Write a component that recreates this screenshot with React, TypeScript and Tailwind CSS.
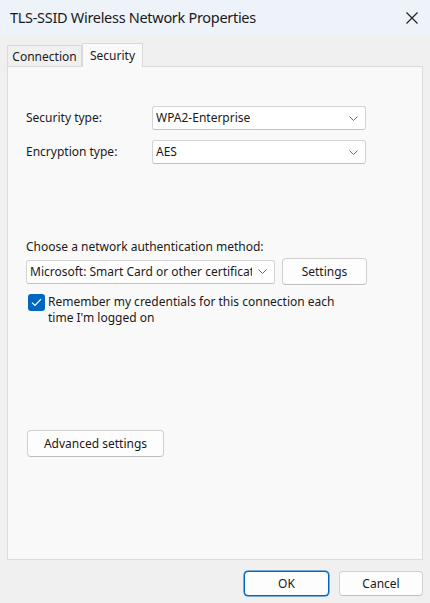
import React from 'react';

const Chevron = () => (
  <svg width="9" height="5" viewBox="0 0 9 5" className="shrink-0">
    <path d="M0.5 0.5 L4.5 4.5 L8.5 0.5" fill="none" stroke="#6a6a6a" strokeWidth="1" />
  </svg>
);

const Select: React.FC<{ value: string; className: string }> = ({ value, className }) => (
  <div
    className={`flex items-center bg-white border border-[#d4d4d4] border-b-[#c2c2c2] rounded-[3px] pl-[3px] pr-[7px] text-[#1a1a1a] ${className}`}
  >
    <span className="flex-1 min-w-0 whitespace-nowrap overflow-hidden mr-[6px]">{value}</span>
    <Chevron />
  </div>
);

const Button: React.FC<{ label: string; className: string; primary?: boolean }> = ({ label, className, primary }) => (
  <div
    className={`flex items-center justify-center bg-[#fdfdfd] rounded-[4px] border ${
      primary ? 'border-[#0067c0] ring-[0.5px] ring-[#0067c0]' : 'border-[#d0d0d0] border-b-[#bdbdbd]'
    } text-[#1a1a1a] ${className}`}
  >
    {label}
  </div>
);

export default function App() {
  return (
    <div className="w-[430px] h-[603px] bg-[#f0f0f0] flex flex-col text-[12px] font-['Noto_Sans',sans-serif] text-[#1a1a1a]">
      <div className="h-[35px] bg-[#eef3f9] flex items-center justify-between pl-[10px] pr-[12px] shrink-0">
        <span className="text-[14.5px] text-[#1a1a1a] tracking-[-0.3px]">TLS-SSID Wireless Network Properties</span>
        <svg width="12" height="12" viewBox="0 0 12 12">
          <path d="M0.5 0.5 L11.5 11.5 M11.5 0.5 L0.5 11.5" stroke="#1a1a1a" strokeWidth="1.1" />
        </svg>
      </div>

      <div className="px-[7px] pt-[8px]">
        <div className="flex items-end h-[23px]">
          <div className="h-[21px] w-[75px] border border-b-0 border-[#d9d9d9] bg-[#f0f0f0] flex items-center justify-center pt-[2px]">
            Connection
          </div>
          <div className="h-[24px] w-[61px] -mb-px relative z-10 border border-b-0 border-[#d9d9d9] bg-[#f9f9f9] flex items-center justify-center">
            Security
          </div>
        </div>
        <div className="h-[494px] border border-[#dcdcdc] bg-[#f9f9f9] pl-[18px] pt-[39px] flex flex-col">
          <div className="flex items-center h-[24px]">
            <span className="w-[126px]">Security type:</span>
            <Select value="WPA2-Enterprise" className="w-[214px] h-[24px]" />
          </div>
          <div className="flex items-center h-[24px] mt-[10px]">
            <span className="w-[126px]">Encryption type:</span>
            <Select value="AES" className="w-[214px] h-[24px]" />
          </div>

          <div className="mt-[75px] leading-[16px]">Choose a network authentication method:</div>
          <div className="flex items-center mt-[3px] gap-[7px]">
            <Select value="Microsoft: Smart Card or other certificate" className="w-[249px] h-[24px]" />
            <Button label="Settings" className="w-[85px] h-[27px]" />
          </div>
          <div className="flex items-start mt-[9px] pl-[2px]">
            <div className="w-[17px] h-[17px] rounded-[3px] bg-[#0067c0] flex items-center justify-center shrink-0">
              <svg width="11" height="9" viewBox="0 0 11 9">
                <path d="M1 4.6 L4 7.4 L10 1.2" fill="none" stroke="white" strokeWidth="1.2" />
              </svg>
            </div>
            <div className="ml-[3px] leading-[16px] w-[300px]">
              Remember my credentials for this connection each time I'm logged on
            </div>
          </div>

          <Button label="Advanced settings" className="w-[137px] h-[27px] mt-[104px] ml-[1px]" />
        </div>
      </div>

      <div className="flex justify-end gap-[10px] pr-[7px] mt-[11px]">
        <Button label="OK" primary className="w-[85px] h-[25px]" />
        <Button label="Cancel" className="w-[84px] h-[25px]" />
      </div>
    </div>
  );
}
